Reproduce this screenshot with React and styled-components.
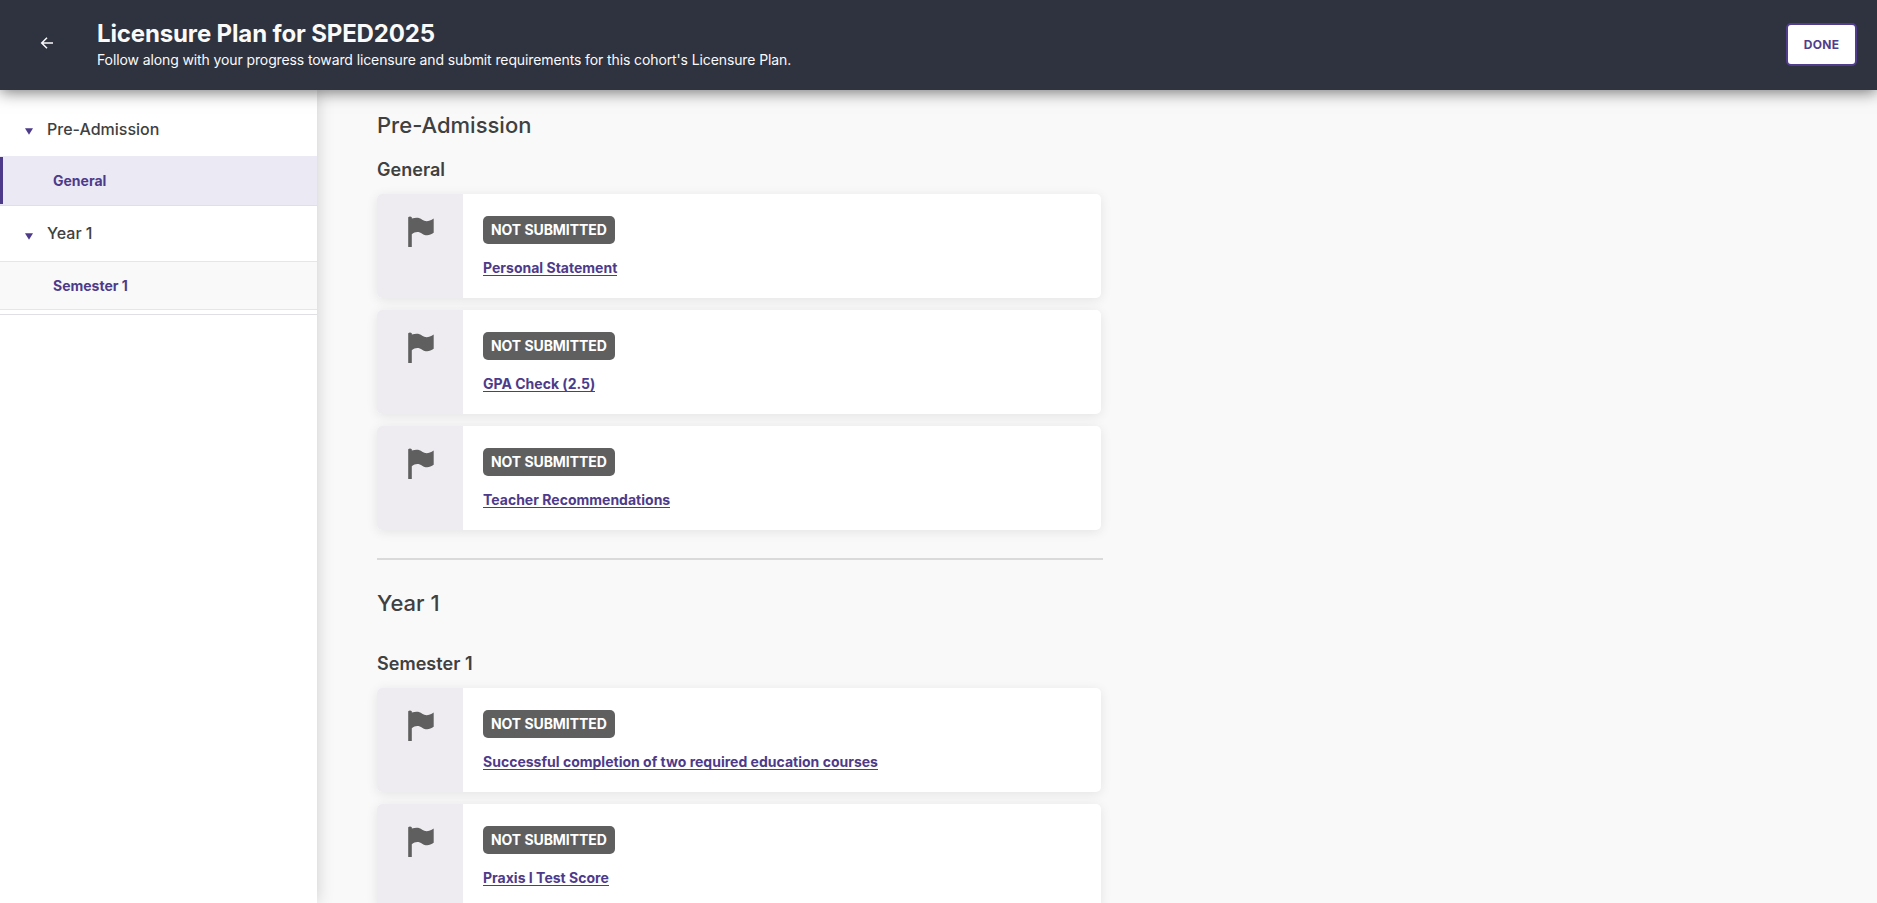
import React from 'react';
import styled, { createGlobalStyle } from 'styled-components';

const GlobalStyle = createGlobalStyle`
    * {
        box-sizing: border-box;
    }
    body {
        margin: 0;
        height: 100vh;
        overflow: hidden;
        background: #f9f9f9;
        color: #404040;
        font-family: Inter, "Liberation Sans", sans-serif;
    }
`

const Page = styled.div`
    height: 100vh;
    display: flex;
    flex-direction: column;
    overflow: hidden;
`

const Header = styled.header`
    height: 90px;
    flex: none;
    display: flex;
    align-items: flex-start;
    padding: 0 20px 0 37px;
    background: #2f3340;
    color: #fafafa;
    box-shadow: 0 2px 15px rgb(0 0 0 / 55%);
    z-index: 2;
`

const BackButton = styled.button`
    display: flex;
    width: 20px;
    margin-top: 33px;
    padding: 0;
    border: none;
    background: none;
    color: #fafafa;
    cursor: pointer;
`

const Heading = styled.div`
    flex: 1;
    margin-left: 40px;
    padding-top: 19px;
`

const Title = styled.h1`
    margin: 0;
    font-size: 24px;
    font-weight: 700;
    line-height: 30px;
    letter-spacing: -0.14px;
`

const Subtitle = styled.p`
    margin: 0;
    padding-top: 1px;
    font-size: 14px;
    line-height: 20px;
    letter-spacing: -0.11px;
`

const DoneButton = styled.button`
    width: 71px;
    height: 43px;
    margin-top: 23px;
    padding: 0;
    border: 2px solid #503e8c;
    border-radius: 5px;
    background: white;
    color: #503e8c;
    font-family: inherit;
    font-size: 12px;
    font-weight: 700;
    letter-spacing: 0.3px;
    cursor: pointer;
`

const Body = styled.div`
    flex: 1;
    display: flex;
    min-height: 0;
`

const Sidebar = styled.nav`
    width: 317px;
    flex: none;
    background: white;
    box-shadow: 0 0 16px rgb(0 0 0 / 18%);
    z-index: 1;
`

const SidebarGroup = styled.div`
    padding-bottom: ${({ last }) => last ? "4px" : "0"};
    border-bottom: 1px solid #e0dfe3;
`

const GroupTitle = styled.div`
    height: ${({ first }) => first ? "66px" : "55px"};
    display: flex;
    align-items: center;
    gap: 14px;
    padding: ${({ first }) => first ? "12px 0 0 25px" : "0 0 1px 25px"};
    font-size: 16px;
    font-weight: 500;
    svg {
        margin-top: ${({ first }) => first ? "4px" : "6px"};
    }
`

const SidebarLink = styled.a`
    display: flex;
    align-items: center;
    height: 49px;
    padding-left: 53px;
    border-top: 1px solid ${({ active }) => active ? "#ebe9f4" : "#e6e6e6"};
    border-bottom: 1px solid ${({ active }) => active ? "#ebe9f4" : "#e6e6e6"};
    background: ${({ active }) => active ? "#ebe9f4" : "#f9f9f9"};
    color: #4d3b8a;
    font-size: 14px;
    font-weight: 700;
    text-decoration: none;
    cursor: pointer;
`

const ActiveMark = styled.span`
    align-self: stretch;
    width: 3px;
    margin: 0 50px 0 -53px;
    background: #4d3b8a;
`

const Content = styled.main`
    flex: 1;
    padding: 19px 0 0 60px;
    overflow: hidden;
`

const Section = styled.section`
    width: 726px;
`

const SectionTitle = styled.h2`
    margin: 0 0 ${({ gap }) => gap}px;
    font-size: 22px;
    font-weight: 500;
    line-height: 32px;
`

const TermTitle = styled.h3`
    margin: 0 0 12px;
    font-size: 18px;
    font-weight: 600;
    line-height: 24px;
    letter-spacing: 0.04px;
`

const CardList = styled.div`
    display: flex;
    flex-direction: column;
    gap: 12px;
`

const Card = styled.div`
    display: flex;
    width: 724px;
    height: 104px;
    border-radius: 5px;
    background: white;
    box-shadow: 0 2px 12px rgb(0 0 0 / 9%);
    overflow: clip;
`

const CardIcon = styled.div`
    width: 86px;
    padding: 22px 0 0 31px;
    background: #eeecf0;
`

const CardText = styled.div`
    display: flex;
    flex-direction: column;
    align-items: flex-start;
    padding: 22px 20px;
`

const Status = styled.span`
    height: 28px;
    padding: 0 8px;
    border-radius: 5px;
    background: #5f5f5f;
    color: white;
    font-size: 14px;
    font-weight: 700;
    line-height: 28px;
    letter-spacing: -0.07px;
`

const Requirement = styled.a`
    margin-top: 16px;
    border-bottom: 1px solid #4d3b8a;
    color: #4d3b8a;
    font-size: 14px;
    font-weight: 700;
    line-height: 15px;
    letter-spacing: 0.01px;
    cursor: pointer;
`

const Divider = styled.hr`
    height: 2px;
    margin: 28px 0 27px;
    border: none;
    background: #dadada;
`

const Arrow = () => (
    <svg width="20" height="20" viewBox="0 0 20 20" fill="none" stroke="currentColor" strokeWidth="1.5">
        <path d="M16 10H5M10 4.7L4.7 10L10 15.3" />
    </svg>
)

const Caret = () => (
    <svg width="8" height="7" viewBox="0 0 8 7" fill="#4d3b8a">
        <path d="M0 0.3H8L4 6.8Z" />
    </svg>
)

const Flag = () => (
    <svg width="26" height="32" viewBox="0 0 26 32" fill="#5f5f5f">
        <path d="M0.2 1.2Q2 0 3.8 1.2V2.6C8 1.4 11 1.3 14.2 3.7C17.5 6 21 5.6 25.7 2.4V16.8C22 19.6 17.8 20.2 14.2 17.7C10.8 15.4 7 15.6 3.8 18.2V31H0.2Z" />
    </svg>
)

const RequirementCard = ({ name }) => (
    <Card>
        <CardIcon><Flag /></CardIcon>
        <CardText>
            <Status>NOT SUBMITTED</Status>
            <Requirement>{name}</Requirement>
        </CardText>
    </Card>
)

const preAdmission = ['Personal Statement', 'GPA Check (2.5)', 'Teacher Recommendations'];
const yearOne = ['Successful completion of two required education courses', 'Praxis I Test Score'];

const App = () => {
    return (
        <Page>
            <GlobalStyle />
            <Header>
                <BackButton aria-label="Back"><Arrow /></BackButton>
                <Heading>
                    <Title>Licensure Plan for SPED2025</Title>
                    <Subtitle>Follow along with your progress toward licensure and submit requirements for this cohort's Licensure Plan.</Subtitle>
                </Heading>
                <DoneButton>DONE</DoneButton>
            </Header>
            <Body>
                <Sidebar>
                    <SidebarGroup>
                        <GroupTitle first><Caret />Pre-Admission</GroupTitle>
                        <SidebarLink active><ActiveMark />General</SidebarLink>
                    </SidebarGroup>
                    <SidebarGroup last>
                        <GroupTitle><Caret />Year 1</GroupTitle>
                        <SidebarLink>Semester 1</SidebarLink>
                    </SidebarGroup>
                </Sidebar>
                <Content>
                    <Section>
                        <SectionTitle gap={17}>Pre-Admission</SectionTitle>
                        <TermTitle>General</TermTitle>
                        <CardList>
                            {preAdmission.map((name) => <RequirementCard key={name} name={name} />)}
                        </CardList>
                        <Divider />
                    </Section>
                    <Section>
                        <SectionTitle gap={33}>Year 1</SectionTitle>
                        <TermTitle>Semester 1</TermTitle>
                        <CardList>
                            {yearOne.map((name) => <RequirementCard key={name} name={name} />)}
                        </CardList>
                    </Section>
                </Content>
            </Body>
        </Page>
    )
}

export default App
